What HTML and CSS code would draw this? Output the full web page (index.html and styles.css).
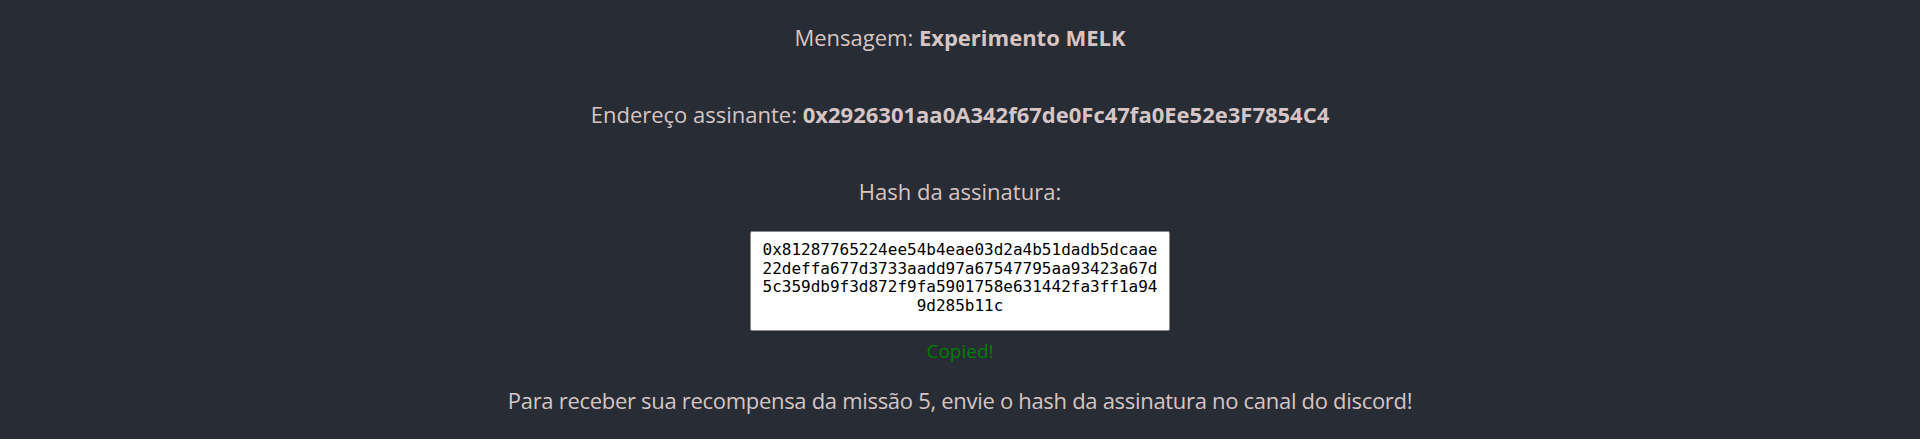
FILE: index.html
```html
<!DOCTYPE html>
<html lang="pt">
<head>
<meta charset="utf-8">
<title>Assinatura</title>
<link rel="stylesheet" href="styles.css">
</head>
<body>
<main class="app">
  <p class="line line-first">Mensagem: <strong>Experimento MELK</strong></p>
  <p class="line">Endereço assinante: <strong>0x2926301aa0A342f67de0Fc47fa0Ee52e3F7854C4</strong></p>
  <p class="line">Hash da assinatura:</p>
  <div class="hash">0x81287765224ee54b4eae03d2a4b51dadb5dcaae22deffa677d3733aadd97a67547795aa93423a67d5c359db9f3d872f9fa5901758e631442fa3ff1a949d285b11c</div>
  <p class="copied">Copied!</p>
  <p class="line line-last">Para receber sua recompensa da missão 5, envie o hash da assinatura no canal do discord!</p>
</main>
</body>
</html>
```

FILE: styles.css
```css
html, body {
  margin: 0;
  padding: 0;
  background: #282c34;
}

.app {
  display: flex;
  flex-direction: column;
  align-items: center;
  padding-top: 22px;
  font-family: "Open Sans", "Noto Sans", sans-serif;
  color: #d6c5c5;
}

.line {
  margin: 0 0 47px 0;
  font-size: 22px;
  line-height: 30px;
  white-space: nowrap;
}

.line strong {
  font-weight: 700;
}

.line:nth-of-type(3) {
  margin-bottom: 25px;
}

.hash {
  box-sizing: border-box;
  width: 420px;
  height: 100px;
  padding: 9px 11px;
  border: 1px solid #8a8a8a;
  border-radius: 2px;
  background: #ffffff;
  color: #000000;
  font-family: "DejaVu Sans Mono", monospace;
  font-size: 16px;
  line-height: 18.67px;
  text-align: center;
  word-break: break-all;
}

.copied {
  margin: 7px 0 21px 0;
  font-size: 19px;
  line-height: 26px;
  color: #008000;
}

.line-last {
  margin-bottom: 0;
  letter-spacing: -0.3px;
}
```
